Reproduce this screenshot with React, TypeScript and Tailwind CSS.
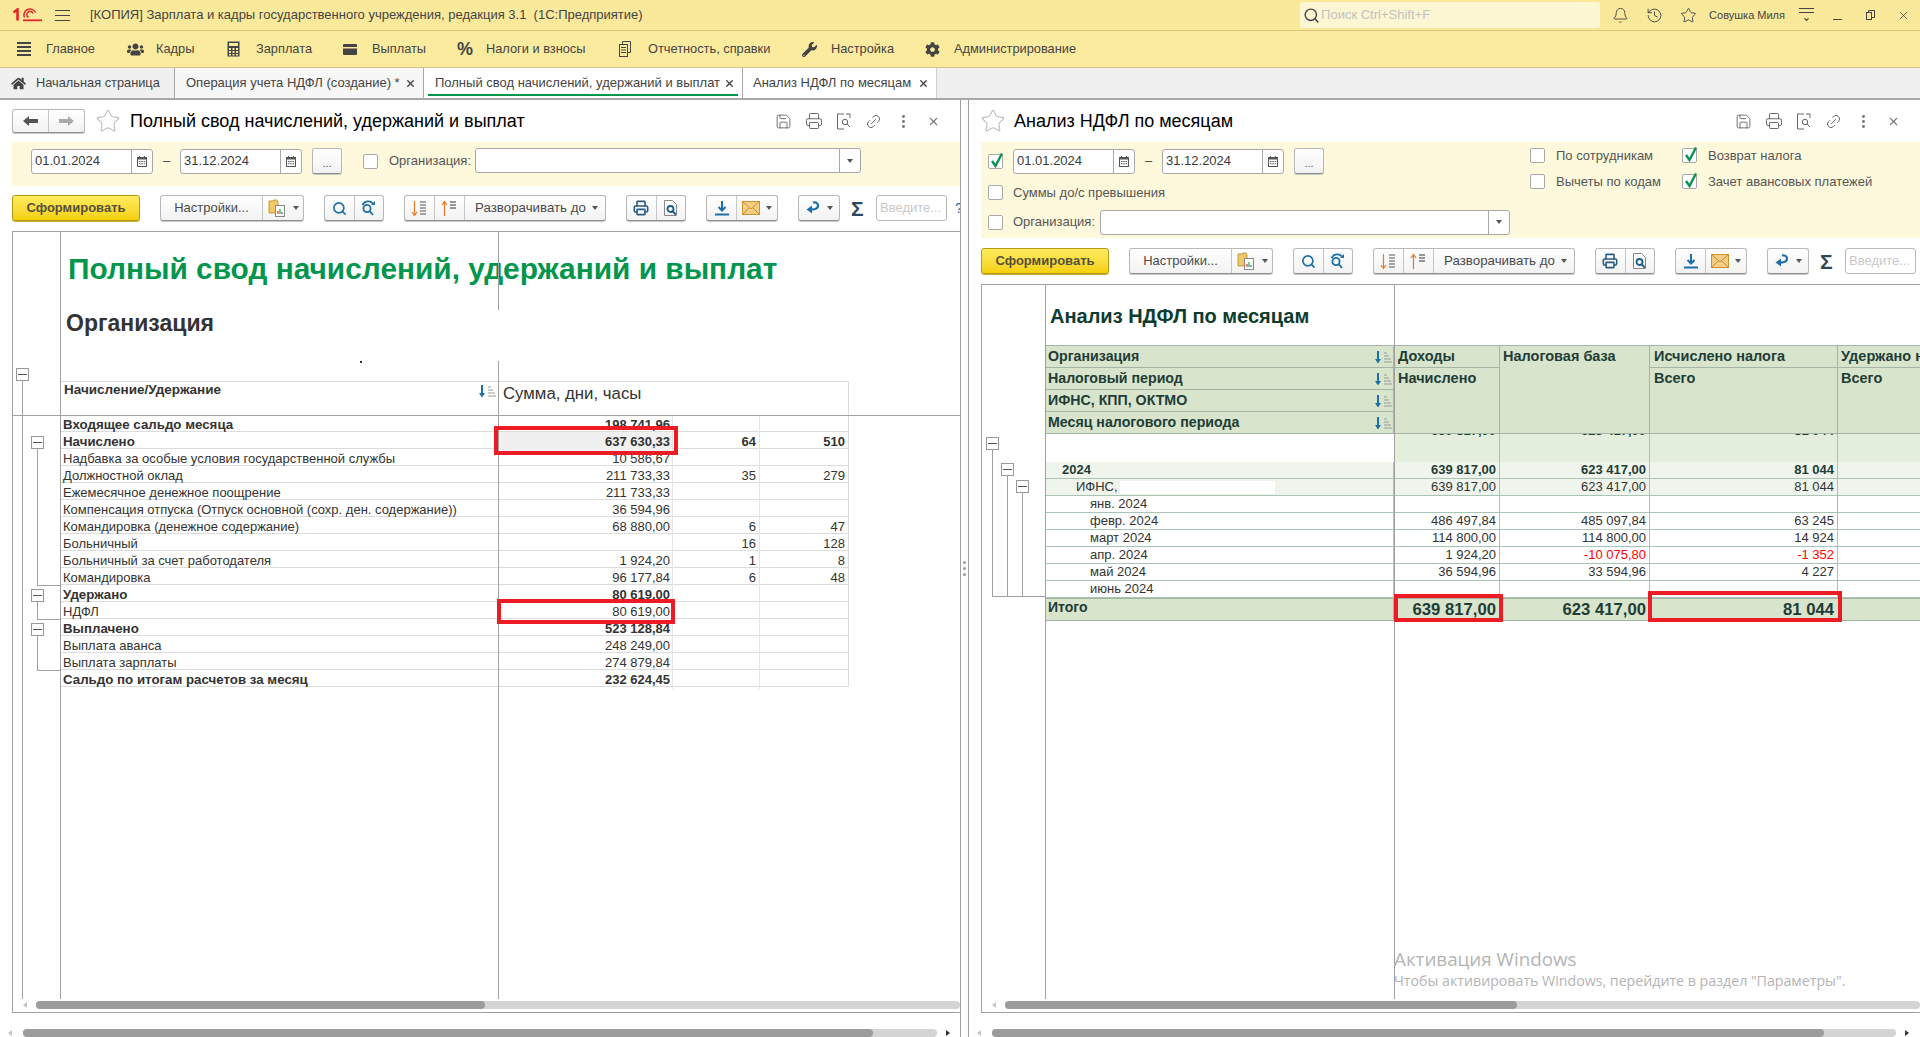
import { Bell, ChevronDown, History, Link2, MoreVertical, Printer, Save, Search, Star, X } from 'lucide-react'
import { FaCog, FaHome, FaUsers, FaWrench } from 'react-icons/fa'
import type { ReactNode } from 'react'

const font = "font-['Liberation_Sans',Arial,sans-serif]"

type LeftRow = { label: string; sum?: string; days?: string; hours?: string; bold?: boolean; selected?: boolean }

const leftRows: LeftRow[] = [
  { label: 'Входящее сальдо месяца', sum: '198 741,96', bold: true },
  { label: 'Начислено', sum: '637 630,33', days: '64', hours: '510', bold: true, selected: true },
  { label: 'Надбавка за особые условия государственной службы', sum: '10 586,67' },
  { label: 'Должностной оклад', sum: '211 733,33', days: '35', hours: '279' },
  { label: 'Ежемесячное денежное поощрение', sum: '211 733,33' },
  { label: 'Компенсация отпуска (Отпуск основной (сохр. ден. содержание))', sum: '36 594,96' },
  { label: 'Командировка (денежное содержание)', sum: '68 880,00', days: '6', hours: '47' },
  { label: 'Больничный', days: '16', hours: '128' },
  { label: 'Больничный за счет работодателя', sum: '1 924,20', days: '1', hours: '8' },
  { label: 'Командировка', sum: '96 177,84', days: '6', hours: '48' },
  { label: 'Удержано', sum: '80 619,00', bold: true },
  { label: 'НДФЛ', sum: '80 619,00' },
  { label: 'Выплачено', sum: '523 128,84', bold: true },
  { label: 'Выплата аванса', sum: '248 249,00' },
  { label: 'Выплата зарплаты', sum: '274 879,84' },
  { label: 'Сальдо по итогам расчетов за месяц', sum: '232 624,45', bold: true },
]

const months = [
  { label: 'янв. 2024', a: '', b: '', c: '' },
  { label: 'февр. 2024', a: '486 497,84', b: '485 097,84', c: '63 245' },
  { label: 'март 2024', a: '114 800,00', b: '114 800,00', c: '14 924' },
  { label: 'апр. 2024', a: '1 924,20', b: '-10 075,80', c: '-1 352', red: true },
  { label: 'май 2024', a: '36 594,96', b: '33 594,96', c: '4 227' },
  { label: 'июнь 2024', a: '', b: '', c: '' },
]

const menu = [
  { label: 'Главное', w: 'w-[110px]', icon: <BurgerThick /> },
  { label: 'Кадры', w: 'w-[100px]', icon: <FaUsers size={17} className="text-[#444]" /> },
  { label: 'Зарплата', w: 'w-[116px]', icon: <CalcIcon /> },
  { label: 'Выплаты', w: 'w-[114px]', icon: <CardIcon /> },
  { label: 'Налоги и взносы', w: 'w-[162px]', icon: <span className="text-[18px] font-bold text-[#444]">%</span> },
  { label: 'Отчетность, справки', w: 'w-[183px]', icon: <ReportIcon /> },
  { label: 'Настройка', w: 'w-[123px]', icon: <FaWrench size={15} className="text-[#444]" /> },
  { label: 'Администрирование', w: 'w-[160px]', icon: <FaCog size={15} className="text-[#444]" /> },
]

function BurgerThick() {
  return (
    <div className="flex w-[14px] flex-col gap-[2px]">
      <div className="h-[2px] bg-[#444]" />
      <div className="h-[2px] bg-[#444]" />
      <div className="h-[2px] bg-[#444]" />
      <div className="h-[2px] bg-[#444]" />
    </div>
  )
}

function CalcIcon() {
  return (
    <svg width="13" height="16" viewBox="0 0 13 16">
      <rect x="0.5" y="0.5" width="12" height="15" fill="#444" />
      <rect x="2" y="2" width="9" height="3" fill="#fbeb9f" />
      <path d="M2 7h2v2H2zM5.5 7h2v2h-2zM9 7h2v2H9zM2 10h2v2H2zM5.5 10h2v2h-2zM9 10h2v2H9zM2 13h2v1.5H2zM5.5 13h2v1.5h-2zM9 13h2v1.5H9z" fill="#fbeb9f" />
    </svg>
  )
}

function CardIcon() {
  return (
    <svg width="14" height="11" viewBox="0 0 14 11">
      <rect width="14" height="11" rx="1" fill="#444" />
      <rect y="3" width="14" height="1.5" fill="#fbeb9f" />
    </svg>
  )
}

function ReportIcon() {
  return (
    <svg width="12" height="16" viewBox="0 0 12 16" fill="none" stroke="#444">
      <path d="M3.5 3V.5h8v11H9" />
      <rect x="0.5" y="3.5" width="8" height="12" />
      <path d="M2 6.5h5M2 9h5M2 11.5h5" />
    </svg>
  )
}

function Logo1C() {
  return (
    <svg width="29" height="14" viewBox="0 0 29 14" fill="none" stroke="#e8262a">
      <path d="M0.500 4.500L4.500 1.500V12.500" strokeWidth="2.600" />
      <path d="M22.500 4.500A6 6 0 1 0 11.500 9.500" strokeWidth="1.500" />
      <path d="M20 5.500A3.200 3.200 0 1 0 15.500 9.500" strokeWidth="1.500" />
      <path d="M10 12.300h19" strokeWidth="1.800" />
    </svg>
  )
}

function Caret() {
  return <span className="ml-[6px] h-0 w-0 border-x-[3px] border-t-[4px] border-x-transparent border-t-[#555]" />
}

function Btn({ children, className = '' }: { children: ReactNode; className?: string }) {
  return (
    <div className={`flex h-[26px] shrink-0 rounded-[3px] border border-[#b8b8b8] border-b-[#8f8f8f] bg-gradient-to-b from-white to-[#f2f2f2] text-[#4a4a4a] shadow-[0_1px_0_#c8c8c8] ${className}`}>
      {children}
    </div>
  )
}

function Seg({ children, className = '' }: { children: ReactNode; className?: string }) {
  return <div className={`flex items-center justify-center border-r border-[#c6c6c6] last:border-r-0 ${className}`}>{children}</div>
}

function SortDownIcon() {
  return (
    <svg width="17" height="17" viewBox="0 0 17 17" fill="none">
      <path d="M3.5 1v14M1 12l2.5 3.5L6 12" stroke="#e8792b" strokeWidth="1.2" />
      <path d="M9 2h6M9 5h6M9 8h6M9 11h6M9 14h6" stroke="#555" />
    </svg>
  )
}

function SortUpIcon() {
  return (
    <svg width="17" height="17" viewBox="0 0 17 17" fill="none">
      <path d="M3.5 16V2M1 5l2.5-3.5L6 5" stroke="#e8792b" strokeWidth="1.2" />
      <path d="M9 2h6M9 5h6M9 8h6" stroke="#333" />
    </svg>
  )
}

function FolderChartIcon() {
  return (
    <svg width="19" height="20" viewBox="0 0 19 20">
      <path d="M1 3h4l1-1h3l1 2v11H1z" fill="#f0c868" stroke="#c79a3c" />
      <rect x="7.5" y="7.5" width="9" height="11" fill="#fff" stroke="#888" />
      <path d="M10 16v-3" stroke="#d33" strokeWidth="1.2" />
      <path d="M12 16v-5" stroke="#3a3" strokeWidth="1.2" />
      <path d="M14 16v-2" stroke="#26a" strokeWidth="1.2" />
    </svg>
  )
}

function FindAgainIcon() {
  return (
    <svg width="17" height="17" viewBox="0 0 17 17" fill="none" stroke="#1c6fa8" strokeWidth="1.8">
      <circle cx="7" cy="8.5" r="3.6" />
      <path d="M9.6 11.2l3.4 3.6M2.5 5A6.4 6.4 0 0 1 13 3.5" />
      <path d="M15 1v4h-4z" fill="#1c6fa8" stroke="none" />
    </svg>
  )
}

function PreviewIcon() {
  return (
    <svg width="16" height="18" viewBox="0 0 16 18" fill="none">
      <path d="M1.5 1.5h8l4 4v11h-12z" stroke="#888" />
      <circle cx="7.5" cy="10" r="3" stroke="#1a5d8a" strokeWidth="1.8" />
      <path d="M9.8 12.4l3 3.2" stroke="#1a5d8a" strokeWidth="2" />
    </svg>
  )
}

function DownloadIcon() {
  return (
    <svg width="16" height="16" viewBox="0 0 16 16" fill="none" stroke="#1c6fa8" strokeWidth="2">
      <path d="M8 1v9M4.5 7L8 10.5 11.5 7M1 14.5h14" />
    </svg>
  )
}

function MailIcon() {
  return (
    <svg width="18" height="14" viewBox="0 0 18 14">
      <rect x="0.5" y="0.5" width="17" height="13" fill="#f3cf86" stroke="#d0912c" />
      <path d="M1 1l8 7 8-7M1 13l6-6M17 13l-6-6" stroke="#d0912c" fill="none" />
    </svg>
  )
}

function ReturnIcon() {
  return (
    <svg width="16" height="16" viewBox="0 0 16 16" fill="none">
      <path d="M8 2.500c5-1 6 3.500 4 5.500-1 1-3 1.500-6 1.500" stroke="#1c6fa8" strokeWidth="2.200" />
      <path d="M7 5.500v8L1.500 9.500z" fill="#1c6fa8" />
    </svg>
  )
}

function Toolbar() {
  return (
    <div className={`flex items-center text-[13px] ${font}`}>
      <div className="flex h-[26px] w-[128px] shrink-0 items-center justify-center rounded-[3px] border border-[#b39a12] bg-gradient-to-b from-[#ffec5c] to-[#f6d000] font-bold text-[#55503a] shadow-[0_1px_0_#c8b040]">
        Сформировать
      </div>
      <Btn className="ml-[20px] w-[144px]">
        <Seg className="w-[102px]">Настройки...</Seg>
        <Seg className="flex-1"><FolderChartIcon /><Caret /></Seg>
      </Btn>
      <Btn className="ml-[20px] w-[60px]">
        <Seg className="flex-1"><Search size={15} strokeWidth={2.6} className="text-[#1c6fa8]" /></Seg>
        <Seg className="flex-1"><FindAgainIcon /></Seg>
      </Btn>
      <Btn className="ml-[20px] w-[202px]">
        <Seg className="w-[30px]"><SortDownIcon /></Seg>
        <Seg className="w-[30px]"><SortUpIcon /></Seg>
        <Seg className="flex-1 pl-[3px] text-[13.3px]">Разворачивать до<Caret /></Seg>
      </Btn>
      <Btn className="ml-[20px] w-[60px]">
        <Seg className="flex-1"><Printer size={16} strokeWidth={2.4} className="text-[#2c5d80]" /></Seg>
        <Seg className="flex-1"><PreviewIcon /></Seg>
      </Btn>
      <Btn className="ml-[20px] w-[72px]">
        <Seg className="w-[30px]"><DownloadIcon /></Seg>
        <Seg className="flex-1"><MailIcon /><Caret /></Seg>
      </Btn>
      <Btn className="ml-[20px] w-[42px] items-center justify-center">
        <ReturnIcon /><Caret />
      </Btn>
      <span className="ml-[11px] w-[25px] shrink-0 text-[21px] font-bold leading-none text-[#2f4858]">Σ</span>
      <div className="flex h-[26px] w-[71px] shrink-0 items-center rounded-[3px] border border-[#b8b8b8] bg-white pl-[3px] text-[#c8c8c8]">Введите...</div>
      <span className="ml-[8px] text-[14px] text-[#1c6fa8]">?</span>
    </div>
  )
}

function DateField({ value }: { value: string }) {
  return (
    <div className="flex h-[25px] w-[122px] shrink-0 rounded-[3px] border border-[#a8a8a8] bg-white text-[13px] text-[#3a3a3a]">
      <span className="flex-1 self-center pl-[3px]">{value}</span>
      <span className="flex w-[21px] items-center justify-center border-l border-[#a8a8a8]">
        <svg width="10" height="11" viewBox="0 0 10 11"><rect y="1" width="10" height="10" fill="#555" /><rect x="1" y="3.500" width="8" height="6.500" fill="#fff" /><path d="M2 5h1.500v1H2zM4.300 5h1.500v1H4.300zM6.600 5h1.500v1H6.600zM2 7.300h1.500v1H2zM4.300 7.300h1.500v1H4.300zM6.600 7.300h1.500v1H6.600z" fill="#555" /><rect x="2" width="1" height="2" fill="#555" /><rect x="7" width="1" height="2" fill="#555" /></svg>
      </span>
    </div>
  )
}

function DatePeriod() {
  return (
    <div className="flex items-center">
      <DateField value="01.01.2024" />
      <span className="w-[27px] text-center text-[13px] text-[#444]">–</span>
      <DateField value="31.12.2024" />
      <div className="ml-[10px] flex h-[26px] w-[30px] items-end justify-center rounded-[3px] border border-[#b8b8b8] border-b-[#8f8f8f] bg-gradient-to-b from-white to-[#f2f2f2] pb-[4px] text-[11px] leading-none text-[#555] shadow-[0_1px_0_#c8c8c8]">...</div>
    </div>
  )
}

function Check({ checked = false }: { checked?: boolean }) {
  return (
    <span className="relative block h-[15px] w-[15px] shrink-0 rounded-[2px] border border-[#a8a8a8] bg-white">
      {checked && (
        <svg className="absolute -top-[3px] left-[1px]" width="14" height="17" viewBox="0 0 14 17" fill="none">
          <path d="M2 9l3.500 5L12 1.500" stroke="#0a9150" strokeWidth="2.400" />
        </svg>
      )}
    </span>
  )
}

function OrgSelect({ className = '' }: { className?: string }) {
  return (
    <div className={`flex h-[25px] rounded-[3px] border border-[#a8a8a8] bg-white ${className}`}>
      <span className="flex-1" />
      <span className="flex w-[21px] items-center justify-center border-l border-[#a8a8a8]">
        <span className="h-0 w-0 border-x-[3px] border-t-[4px] border-x-transparent border-t-[#555]" />
      </span>
    </div>
  )
}

function FormTitle({ title, withNav }: { title: string; withNav?: boolean }) {
  return (
    <div className="flex h-[42px] shrink-0 items-center pr-[20px]">
      {withNav && (
        <div className="ml-[12px] flex h-[24px] w-[73px] rounded-[3px] border border-[#b8b8b8] border-b-[#8f8f8f] bg-gradient-to-b from-white to-[#f2f2f2] shadow-[0_1px_0_#c8c8c8]">
          <span className="flex flex-1 items-center justify-center border-r border-[#c6c6c6]">
            <svg width="15" height="10" viewBox="0 0 15 10"><path d="M0 5l6-5v3h9v4H6v3z" fill="#555" /></svg>
          </span>
          <span className="flex flex-1 items-center justify-center">
            <svg width="15" height="10" viewBox="0 0 15 10"><path d="M15 5L9 0v3H0v4h9v3z" fill="#aaa" /></svg>
          </span>
        </div>
      )}
      <Star size={26} strokeWidth={1} className={`text-[#bcbcbc] ${withNav ? 'ml-[10px]' : 'ml-[11px]'}`} />
      <h2 className={`text-[18px] text-black ${withNav ? 'ml-[9px]' : 'ml-[8px]'} ${font}`}>{title}</h2>
      <div className="ml-auto flex items-center gap-[13px] text-[#666]">
        <Save size={17} strokeWidth={1.300} />
        <Printer size={18} strokeWidth={1.300} />
        <svg width="16" height="17" viewBox="0 0 16 17" fill="none" stroke="#666"><path d="M8 1H1.500v15H8" /><path d="M10 1h4v4" /><circle cx="9" cy="9" r="2.700" /><path d="M11 11l3 3" /></svg>
        <Link2 size={17} strokeWidth={1.300} className="-rotate-45" />
        <MoreVertical size={17} strokeWidth={2.200} className="text-[#777]" />
        <X size={13} className="ml-[2px] text-[#777]" />
      </div>
    </div>
  )
}

function TreeBox({ className }: { className: string }) {
  return (
    <span className={`absolute z-10 flex h-[13px] w-[13px] items-center justify-center border border-[#999] bg-white ${className}`}>
      <span className="h-px w-[9px] bg-[#555]" />
    </span>
  )
}

function Line({ className }: { className: string }) {
  return <span className={`pointer-events-none absolute bg-[#a0a0a0] ${className}`} />
}

function SortMark() {
  return (
    <svg className="shrink-0" width="19" height="13" viewBox="0 0 19 13" fill="none">
      <path d="M4 0v10" stroke="#1c6fa8" strokeWidth="2" />
      <path d="M1 8l3 4.500L7 8z" fill="#1c6fa8" />
      <path d="M10 2h3M10 5h5M10 8h7M10 11h8" stroke="#999" />
    </svg>
  )
}

function ScrollBar({ track, thumb }: { track: string; thumb: string }) {
  return (
    <div className={`h-[8px] rounded-[4px] bg-[#d4d4d4] ${track}`}>
      <div className={`h-full rounded-[4px] bg-[#9c9c9c] ${thumb}`} />
    </div>
  )
}

function ArrowLeft({ className = '' }: { className?: string }) {
  return <span className={`h-0 w-0 shrink-0 border-y-[3px] border-r-[4px] border-y-transparent border-r-[#c4c4c4] ${className}`} />
}

function LeftReport() {
  return (
    <div className="ml-[12px] mt-[10px] flex min-h-0 flex-1 flex-col border-y border-l border-[#a0a0a0]">
      <div className="relative min-h-0 flex-1 overflow-hidden">
        <Line className="left-[47px] top-0 h-full w-px" />
        <Line className="left-[485px] top-0 h-[78px] w-px" />
        <Line className="left-[485px] top-[129px] bottom-0 w-px" />
        <Line className="left-0 right-0 top-[183px] h-px" />
        <Line className="left-[9px] top-[148px] bottom-0 w-px" />
        <Line className="left-[24px] top-[216px] h-[138px] w-px" />
        <Line className="left-[24px] top-[353px] h-px w-[23px]" />
        <Line className="left-[24px] top-[369px] h-[19px] w-px" />
        <Line className="left-[24px] top-[387px] h-px w-[23px]" />
        <Line className="left-[24px] top-[403px] h-[36px] w-px" />
        <Line className="left-[24px] top-[438px] h-px w-[23px]" />
        <TreeBox className="left-[3px] top-[136px]" />
        <TreeBox className="left-[18px] top-[204px]" />
        <TreeBox className="left-[18px] top-[357px]" />
        <TreeBox className="left-[18px] top-[391px]" />
        <span className="absolute left-[347px] top-[129px] h-[2px] w-[2px] bg-[#333]" />

        <div className="ml-[47px] h-[149px] pt-[19px]">
          <h1 className="whitespace-nowrap pl-[8px] text-[29.850px] font-bold leading-[36px] text-[#00964b]">Полный свод начислений, удержаний и выплат</h1>
          <h2 className="mt-[23px] pl-[6px] text-[23px] font-bold leading-[27px] text-[#333]">Организация</h2>
        </div>

        <div className="ml-[47px] grid h-[34px] w-[789px] grid-cols-[438px_1fr] border-x border-t border-[#dcdcdc]">
          <div className="flex items-start justify-between pl-[3px] pr-[2px] text-[13.500px] font-bold leading-[16px] text-[#333]">
            <span>Начисление/Удержание</span>
            <span className="mt-[3px]"><SortMark /></span>
          </div>
          <div className="pl-[4px] text-[16.800px] leading-[24px] text-[#333]">Сумма, дни, часы</div>
        </div>

        <div className="ml-[47px] w-[789px]">
          {leftRows.map(r => (
            <div key={r.label + r.sum} className={`grid h-[17px] grid-cols-[438px_175px_87px_1fr] border-b border-r border-[#dcdcdc] text-[13px] leading-[19px] text-[#333] ${r.bold ? 'font-bold' : ''}`}>
              <span className={`truncate pl-[3px] ${r.bold ? 'text-[13.300px]' : ''}`}>{r.label}</span>
              <span className={`border-r border-[#e4e4e4] pr-[2px] text-right ${r.selected ? 'bg-[#f0f0f0]' : ''}`}>{r.sum}</span>
              <span className="border-r border-[#e4e4e4] pr-[3px] text-right">{r.days}</span>
              <span className="pr-[3px] text-right">{r.hours}</span>
            </div>
          ))}
        </div>

        <span className="absolute left-[481px] top-[194px] z-20 h-[29px] w-[184px] border-[4px] border-[#ed1c24]" />
        <span className="absolute left-[484px] top-[367px] z-20 h-[25px] w-[178px] border-[4px] border-[#ed1c24]" />
      </div>
      <div className="flex h-[13px] shrink-0 items-start pl-[10px] pt-[2px]">
        <ArrowLeft className="mr-[9px] mt-[1px]" />
        <ScrollBar track="flex-1" thumb="w-[449px]" />
      </div>
    </div>
  )
}

function HeaderCell({ children, className = '' }: { children?: ReactNode; className?: string }) {
  return <div className={`border-b border-r border-[#a5b5a5] bg-[#d8e4cc] pl-[3px] pt-[1px] text-[14.500px] font-bold leading-[19px] text-[#1f3d36] ${className}`}>{children}</div>
}

function RightReport() {
  const sideRows = ['Организация', 'Налоговый период', 'ИФНС, КПП, ОКТМО', 'Месяц налогового периода']
  const rowCols = 'grid grid-cols-[349px_106px_150px_188px_1fr]'
  const cell = 'border-r border-[#a8c4b4] pr-[3px] text-right'
  return (
    <div className="ml-[12px] mt-[10px] flex min-h-0 flex-1 flex-col border-y border-l border-[#a0a0a0]">
      <div className="relative min-h-0 flex-1 overflow-hidden">
        <Line className="left-[63px] top-0 h-full w-px" />
        <Line className="left-[412px] top-0 h-full w-px" />
        <Line className="left-[10px] top-[160px] h-[152px] w-px" />
        <Line className="left-[25px] top-[190px] h-[122px] w-px" />
        <Line className="left-[40px] top-[206px] h-[106px] w-px" />
        <Line className="left-[10px] top-[311px] h-px w-[53px]" />
        <TreeBox className="left-[4px] top-[152px]" />
        <TreeBox className="left-[19px] top-[178px]" />
        <TreeBox className="left-[34px] top-[195px]" />

        <div className="ml-[63px] h-[60px] pl-[5px] pt-[20px] text-[20px] font-bold leading-[22px] text-[#0d3c30]">Анализ НДФЛ по месяцам</div>

        <div className="ml-[63px] grid grid-cols-[349px_106px_150px_188px_1fr] grid-rows-[22px_22px_22px_22px] border-t border-[#a5b5a5]">
          {sideRows.map((s, i) => (
            <div key={s} className={`col-start-1 flex items-start justify-between border-b border-r border-[#a5b5a5] bg-[#d8e4cc] pl-[3px] pt-[1px] text-[14.200px] font-bold leading-[19px] text-[#1f3d36] ${i === 0 ? 'row-start-1' : i === 1 ? 'row-start-2' : i === 2 ? 'row-start-3' : 'row-start-4'}`}>
              {s}
              <span className="mt-[4px]"><SortMark /></span>
            </div>
          ))}
          <HeaderCell className="col-start-2 row-start-1 pl-[4px]">Доходы</HeaderCell>
          <HeaderCell className="col-start-2 row-span-3 row-start-2 pl-[4px]">Начислено</HeaderCell>
          <HeaderCell className="col-start-3 row-span-4 row-start-1">Налоговая база</HeaderCell>
          <HeaderCell className="col-start-4 row-start-1 pl-[4px]">Исчислено налога</HeaderCell>
          <HeaderCell className="col-start-4 row-span-3 row-start-2 pl-[4px]">Всего</HeaderCell>
          <HeaderCell className="col-start-5 row-start-1 whitespace-nowrap">Удержано налога</HeaderCell>
          <HeaderCell className="col-start-5 row-span-3 row-start-2">Всего</HeaderCell>
        </div>

        <div className="ml-[63px] text-[13px] leading-[15px] text-[#333]">
          <div className={`${rowCols} h-[28px] overflow-hidden font-bold text-[#1f3d36]`}>
            <span className="bg-white" />
            <span className={`${cell} bg-[#e3eedd] -mt-[11px]`}>639 817,00</span>
            <span className={`${cell} bg-[#e3eedd] -mt-[11px]`}>623 417,00</span>
            <span className={`${cell} bg-[#e3eedd] -mt-[11px]`}>81 044</span>
            <span className="bg-[#e3eedd] -mt-[11px]" />
          </div>
          <div className={`${rowCols} h-[17px] border-b border-[#a8c4b4] bg-[#eff4ec] font-bold text-[#1f3d36]`}>
            <span className="border-r border-[#a8c4b4] pl-[17px]">2024</span>
            <span className={cell}>639 817,00</span>
            <span className={cell}>623 417,00</span>
            <span className={cell}>81 044</span>
            <span />
          </div>
          <div className={`${rowCols} h-[17px] border-b border-[#a8c4b4] bg-[#eff4ec]`}>
            <span className="flex border-r border-[#a8c4b4] pl-[31px]">ИФНС,<span className="ml-[2px] mt-[2px] h-[13px] w-[155px] bg-white" /></span>
            <span className={cell}>639 817,00</span>
            <span className={cell}>623 417,00</span>
            <span className={cell}>81 044</span>
            <span />
          </div>
          {months.map(m => (
            <div key={m.label} className={`${rowCols} h-[17px] border-b border-[#a8c4b4]`}>
              <span className="border-r border-[#a8c4b4] pl-[45px]">{m.label}</span>
              <span className={cell}>{m.a}</span>
              <span className={`${cell} ${m.red ? 'text-[#f00]' : ''}`}>{m.b}</span>
              <span className={`${cell} ${m.red ? 'text-[#f00]' : ''}`}>{m.c}</span>
              <span />
            </div>
          ))}
          <div className={`${rowCols} h-[23px] border-y border-[#a5b5a5] bg-[#d8e4cc] font-bold leading-[17px] text-[#1f3d36]`}>
            <span className="border-r border-[#a5b5a5] pl-[3px] text-[14px]">Итого</span>
            <span className="pr-[4px] pt-[2px] text-right text-[16.700px]">639 817,00</span>
            <span className="pr-[4px] pt-[2px] text-right text-[16.700px]">623 417,00</span>
            <span className="pr-[4px] pt-[2px] text-right text-[16.700px]">81 044</span>
            <span />
          </div>
        </div>

        <span className="absolute left-[412px] top-[309px] z-20 h-[28px] w-[109px] border-[4px] border-[#ed1c24]" />
        <span className="absolute left-[666px] top-[306px] z-20 h-[31px] w-[194px] border-[4px] border-[#ed1c24]" />

        <div className="absolute left-[412px] top-[662px] z-20 font-['Open_Sans',sans-serif] text-[#b4b4b4]">
          <div className="text-[18.800px] leading-[24px]">Активация Windows</div>
          <div className="whitespace-nowrap pt-[1px] text-[14.200px] leading-[18px]">Чтобы активировать Windows, перейдите в раздел "Параметры".</div>
        </div>
      </div>
      <div className="flex h-[13px] shrink-0 items-start pl-[10px] pt-[2px]">
        <ArrowLeft className="mr-[9px] mt-[1px]" />
        <ScrollBar track="flex-1" thumb="w-[512px]" />
      </div>
    </div>
  )
}

export default function App() {
  return (
    <div className={`flex h-[1037px] w-[1920px] flex-col overflow-hidden bg-white text-[#333] ${font}`}>
      {/* заголовок окна */}
      <div className="flex h-[31px] shrink-0 items-center border-b border-[#d6c67c] bg-[#fae99b] text-[13px] text-[#444]">
        <span className="ml-[13px]"><Logo1C /></span>
        <div className="ml-[13px] flex w-[15px] flex-col gap-[4px]">
          <span className="h-px bg-[#444]" /><span className="h-px bg-[#444]" /><span className="h-px bg-[#444]" />
        </div>
        <span className="ml-[20px] whitespace-pre">[КОПИЯ] Зарплата и кадры государственного учреждения, редакция 3.1  (1С:Предприятие)</span>
        <div className="ml-auto flex h-[26px] w-[300px] items-center rounded-[3px] bg-[#fdf6d2] pl-[3px] text-[#c2c2c2]">
          <Search size={17} className="mr-[1px] text-[#444]" />Поиск Ctrl+Shift+F
        </div>
        <Bell size={17} strokeWidth={1.300} className="ml-[12px]" />
        <History size={17} strokeWidth={1.300} className="ml-[17px]" />
        <Star size={17} strokeWidth={1.300} className="ml-[17px]" />
        <span className="ml-[12px] text-[11px]">Совушка Миля</span>
        <div className="ml-[14px] flex w-[15px] flex-col items-center gap-[3px]">
          <span className="h-px w-full bg-[#444]" /><span className="h-px w-full bg-[#444]" />
          <ChevronDown size={7} strokeWidth={4} />
        </div>
        <span className="ml-[19px] mt-[9px] h-px w-[9px] bg-[#444]" />
        <svg className="ml-[24px]" width="9" height="10" viewBox="0 0 9 10" fill="none" stroke="#444"><rect x="0.500" y="2.500" width="5" height="7" /><path d="M2.500 2.500V.500h6v7h-3" /></svg>
        <X size={13} strokeWidth={1.400} className="ml-[22px] mr-[10px]" />
      </div>

      {/* разделы */}
      <div className="flex h-[37px] shrink-0 items-center border-b border-[#cfc188] bg-[#fbeb9f] pl-[17px] text-[12.800px] text-[#444]">
        {menu.map(m => (
          <div key={m.label} className={`flex items-center ${m.w}`}>
            <span className="flex w-[29px] shrink-0 items-center">{m.icon}</span>
            <span className="whitespace-nowrap">{m.label}</span>
          </div>
        ))}
      </div>

      {/* вкладки */}
      <div className="flex h-[32px] shrink-0 border-b-2 border-[#a8a8a8] bg-[#f0f0f0] text-[13px] text-[#444]">
        <div className="flex w-[175px] items-center border-r border-[#a8a8a8] pl-[11px] text-[12.800px]">
          <FaHome size={15} className="mr-[10px]" />Начальная страница
        </div>
        <div className="flex w-[249px] items-center justify-between border-r border-[#a8a8a8] bg-[#f7f7f7] pl-[11px] pr-[7px]">
          Операция учета НДФЛ (создание) * <X size={11} strokeWidth={3} />
        </div>
        <div className="relative flex w-[319px] items-center justify-between border-r border-[#a8a8a8] bg-white pl-[11px] pr-[7px]">
          <span className="whitespace-nowrap">Полный свод начислений, удержаний и выплат</span> <X size={11} strokeWidth={3} />
          <span className="absolute bottom-[2px] left-[4px] right-[4px] h-[2px] bg-[#00964b]" />
        </div>
        <div className="flex w-[194px] items-center justify-between border-r border-[#d0d0d0] bg-white pl-[10px] pr-[7px]">
          <span className="whitespace-nowrap">Анализ НДФЛ по месяцам</span> <X size={11} strokeWidth={3} />
        </div>
      </div>

      <div className="flex min-h-0 flex-1">
        {/* левая форма */}
        <div className="flex w-[960px] shrink-0 flex-col overflow-hidden">
          <FormTitle title="Полный свод начислений, удержаний и выплат" withNav />
          <div className="ml-[12px] flex h-[44px] shrink-0 items-start bg-[#fef9dc] pl-[19px] pt-[6px]">
            <DatePeriod />
            <span className="ml-[21px] mt-[6px]"><Check /></span>
            <span className="ml-[11px] mt-[3px] text-[13px] text-[#555]">Организация:</span>
            <OrgSelect className="ml-[4px] w-[386px]" />
          </div>
          <div className="ml-[12px] mt-[9px] shrink-0"><Toolbar /></div>
          <LeftReport />
          <div className="flex h-[24px] shrink-0 items-end pl-[8px]">
            <ArrowLeft className="mb-px mr-[11px]" />
            <ScrollBar track="w-[914px]" thumb="w-[850px]" />
            <span className="ml-[9px] mb-px h-0 w-0 border-y-[3px] border-l-[4px] border-y-transparent border-l-[#333]" />
          </div>
        </div>

        {/* разделитель */}
        <div className="flex w-[9px] shrink-0 flex-col items-center justify-center gap-[3px] border-x border-[#a0a0a0]">
          <span className="h-[3px] w-[3px] rounded-full bg-[#999]" />
          <span className="h-[3px] w-[3px] rounded-full bg-[#999]" />
          <span className="h-[3px] w-[3px] rounded-full bg-[#999]" />
        </div>

        {/* правая форма */}
        <div className="flex min-w-0 flex-1 flex-col overflow-hidden">
          <FormTitle title="Анализ НДФЛ по месяцам" />
          <div className="ml-[12px] flex h-[96px] shrink-0 bg-[#fef9dc] pl-[7px]">
            <div className="w-[542px] shrink-0">
              <div className="flex h-[36px] items-center pt-[2px]">
                <Check checked />
                <span className="ml-[10px]"><DatePeriod /></span>
              </div>
              <div className="flex h-[29px] items-center">
                <Check /><span className="ml-[10px] text-[13px] text-[#555]">Суммы до/с превышения</span>
              </div>
              <div className="flex h-[30px] items-center">
                <Check /><span className="ml-[10px] text-[13px] text-[#555]">Организация:</span>
                <OrgSelect className="ml-[5px] w-[410px]" />
              </div>
            </div>
            <div className="grid grid-cols-[152px_1fr] content-start gap-y-[6.500px] pt-[4px] text-[13px] text-[#555]">
              <div className="flex items-center"><Check /><span className="ml-[11px]">По сотрудникам</span></div>
              <div className="flex items-center"><Check checked /><span className="ml-[11px]">Возврат налога</span></div>
              <div className="flex items-center"><Check /><span className="ml-[11px]">Вычеты по кодам</span></div>
              <div className="flex items-center"><Check checked /><span className="ml-[11px]">Зачет авансовых платежей</span></div>
            </div>
          </div>
          <div className="ml-[12px] mt-[10px] shrink-0"><Toolbar /></div>
          <RightReport />
          <div className="flex h-[24px] shrink-0 items-end pl-[8px]">
            <ArrowLeft className="mb-px mr-[11px]" />
            <ScrollBar track="w-[904px]" thumb="w-[832px]" />
            <span className="ml-[9px] mb-px h-0 w-0 border-y-[3px] border-l-[4px] border-y-transparent border-l-[#333]" />
          </div>
        </div>
      </div>
    </div>
  )
}
